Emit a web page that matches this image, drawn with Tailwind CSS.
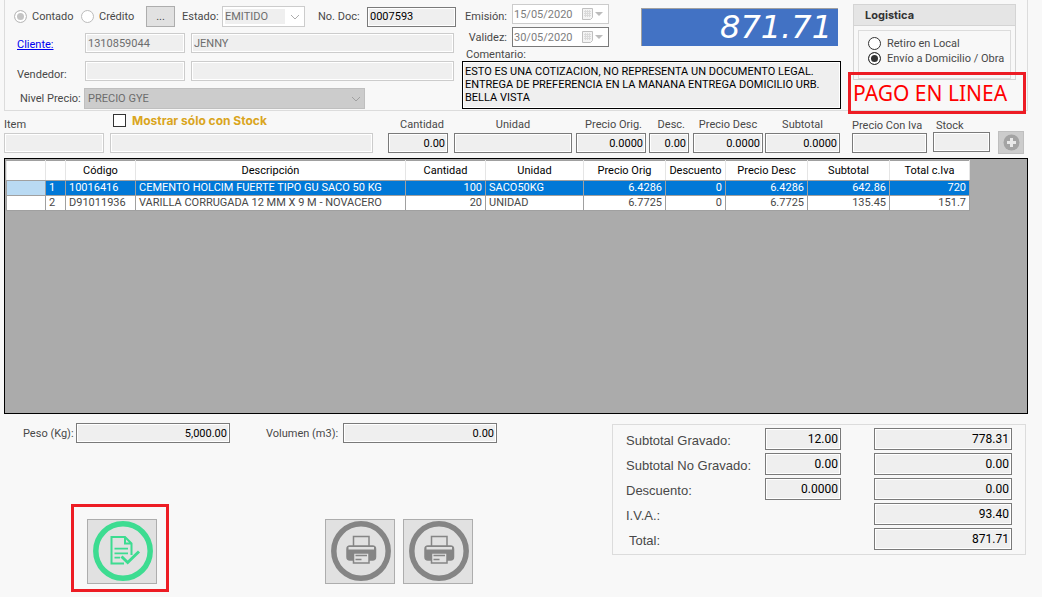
<!doctype html>
<html lang="es">

<head>
  <meta charset="UTF-8">
  <meta name="viewport" content="width=device-width, initial-scale=1.0">
  <title>Cotización</title>
  <script src="https://cdn.jsdelivr.net/npm/@tailwindcss/browser@4"></script>
</head>

<body class="bg-[#f8f8f8] font-[Roboto,'Liberation_Sans',sans-serif] text-[11px] leading-[13px] text-[#484848]">
  <div class="pl-1 pr-[14px]">

    <!-- header data -->
    <div class="relative flex h-[111px] border border-t-0 border-[#dcdcdc] pr-[11px]">
      <div class="w-[451px] shrink-0 pt-[6px]">
        <div class="flex h-[21px] items-center">
          <label class="ml-[9px] flex w-[67px] items-center gap-[5px]"><input type="radio" name="pago" checked disabled class="size-[13px] appearance-none rounded-full border border-[#bcbcbc] bg-white checked:bg-[#c4c4c4] checked:shadow-[inset_0_0_0_2px_#fff]">Contado</label>
          <label class="flex w-[65px] items-center gap-[5px]"><input type="radio" name="pago" disabled class="size-[13px] appearance-none rounded-full border border-[#bcbcbc] bg-white">Crédito</label>
          <button class="h-[21px] w-[29px] border border-[#adadad] bg-[#e1e1e1]">...</button>
          <label for="estado" class="ml-[7px] w-[40px]">Estado:</label>
          <div class="relative">
            <select id="estado" disabled class="h-[21px] w-[83px] appearance-none border border-[#ccc] bg-[#efefef] pl-[2px] text-[#6d6d6d] opacity-100 shadow-[inset_0_0_0_2px_#fff]"><option>EMITIDO</option></select>
            <svg class="pointer-events-none absolute top-[2px] right-[1px] h-[17px] w-[19px] bg-white" viewBox="0 0 19 17" fill="none" stroke="#adadad"><path d="M6 7l4 4 4-4"/></svg>
          </div>
          <label for="doc" class="ml-[13px] w-[49px] whitespace-nowrap">No. Doc:</label>
          <input id="doc" readonly value="0007593" class="h-[20px] min-w-0 flex-1 border border-[#7a7a7a] bg-[#efefef] px-[2px] text-black shadow-[inset_0_0_0_1px_#fff]">
        </div>
        <div class="mt-[6px] flex pr-[2px]">
          <a href="#" class="mt-[5px] ml-[12px] w-[68px] text-[#0000f0] underline">Cliente:</a>
          <input aria-label="Identificación" disabled value="1310859044" class="h-[20px] w-[100px] border border-[#ccc] bg-[#efefef] px-[2px] text-[#6d6d6d] shadow-[inset_0_0_0_1px_#fff]">
          <input aria-label="Nombre del cliente" disabled value="JENNY" class="ml-[6px] h-[20px] min-w-0 flex-1 border border-[#ccc] bg-[#efefef] px-[2px] text-[#6d6d6d] shadow-[inset_0_0_0_1px_#fff]">
        </div>
        <div class="mt-[8px] flex pr-[2px]">
          <label for="vendedor" class="mt-[7px] ml-[12px] w-[68px]">Vendedor:</label>
          <input id="vendedor" disabled class="h-[20px] w-[100px] border border-[#ccc] bg-[#efefef] px-[2px] shadow-[inset_0_0_0_1px_#fff]">
          <input aria-label="Nombre del vendedor" disabled class="ml-[6px] h-[20px] min-w-0 flex-1 border border-[#ccc] bg-[#efefef] px-[2px] shadow-[inset_0_0_0_1px_#fff]">
        </div>
        <div class="mt-[7px] flex items-center">
          <label for="nivel" class="ml-[15px] w-[64px] whitespace-nowrap">Nivel Precio:</label>
          <div class="relative">
            <select id="nivel" disabled class="h-[21px] w-[281px] appearance-none border border-[#bfbfbf] bg-[#ccc] px-[3px] text-[#6d6d6d] opacity-100"><option>PRECIO GYE</option></select>
            <svg class="pointer-events-none absolute top-[2px] right-0 h-[17px] w-[19px]" viewBox="0 0 19 17" fill="none" stroke="#a0a0a0"><path d="M6 7l4 4 4-4"/></svg>
          </div>
        </div>
      </div>

      <div class="ml-[6px] flex min-w-0 flex-1 flex-col">
        <div class="flex pt-1">
          <div class="w-[147px] shrink-0">
            <div class="flex h-[20px] items-center">
              <label for="emision" class="w-[50px] pt-1 pr-[5px] text-right">Emisión:</label>
              <div class="flex h-[20px] w-[97px] items-center border border-[#ccc] bg-white">
                <input id="emision" disabled value="15/05/2020" class="w-[69px] pl-[1px] text-[#7d7d7d]">
                <svg class="h-[14px] w-[22px]" viewBox="0 0 22 14"><path d="M.5 1.500h10v9l-2 2h-8z" fill="#f4f4f4" stroke="#c0c0c0"/><path d="M2 4.500h7M2 6.500h7M2 8.500h7M3.500 3v7M5.500 3v7M7.500 3v7" stroke="#dadada"/><path d="M13 5h8l-4 4z" fill="#bcbcbc"/></svg>
              </div>
            </div>
            <div class="mt-[3px] flex h-[20px] items-center">
              <label for="validez" class="w-[50px] pr-[5px] text-right">Validez:</label>
              <div class="flex h-[20px] w-[97px] items-center border border-[#7a7a7a] bg-white">
                <input id="validez" disabled value="30/05/2020" class="w-[69px] pl-[1px] text-[#7d7d7d]">
                <svg class="h-[14px] w-[22px]" viewBox="0 0 22 14"><path d="M.5 1.500h10v9l-2 2h-8z" fill="#f4f4f4" stroke="#c0c0c0"/><path d="M2 4.500h7M2 6.500h7M2 8.500h7M3.500 3v7M5.500 3v7M7.500 3v7" stroke="#dadada"/><path d="M13 5h8l-4 4z" fill="#bcbcbc"/></svg>
              </div>
            </div>
          </div>
          <div class="mt-1 mr-[3px] ml-[32px] flex h-[38px] flex-1 items-center justify-end border-t border-l border-[#a0a0a0] bg-[#4272c4] pr-[6px] font-['DejaVu_Sans',sans-serif] text-[32px] text-white italic">871.71</div>
        </div>
        <label for="comentario" class="mt-[2px] ml-[4px] leading-[12px]">Comentario:</label>
        <textarea id="comentario" readonly class="h-[48px] w-full resize-none overflow-hidden border border-black bg-[#efefef] px-[2px] pt-[3px] text-black shadow-[inset_0_0_0_1px_#fff]">ESTO ES UNA COTIZACION, NO REPRESENTA UN DOCUMENTO LEGAL.
ENTREGA DE PREFERENCIA EN LA MANANA ENTREGA DOMICILIO URB.
BELLA VISTA</textarea>
      </div>

      <fieldset class="mt-1 ml-[12px] h-[76px] w-[163px] shrink-0 border border-[#d4d4d4]">
        <div class="h-[21px] border-b border-[#d4d4d4] bg-[#e5e5e5] pt-1 pl-[11px] font-[Inter,sans-serif] text-[11px] font-bold text-[#333]">Logistica</div>
        <div class="mx-1 mt-1 h-[49px] border border-[#dcdcdc] pt-[5px] pl-[9px]">
          <label class="flex h-[15px] items-center gap-[6px] whitespace-nowrap"><input type="radio" name="envio" class="size-[13px] appearance-none rounded-full border border-[#333] bg-white">Retiro en Local</label>
          <label class="flex h-[15px] items-center gap-[6px] whitespace-nowrap"><input type="radio" name="envio" checked class="size-[13px] appearance-none rounded-full border border-[#333] bg-white checked:bg-[#333] checked:shadow-[inset_0_0_0_2px_#fff]">Envío a Domicilio / Obra</label>
        </div>
      </fieldset>

      <div class="absolute top-[72px] right-[1px] flex h-[42px] w-[178px] items-center border-3 border-[#ed1c24] pl-[2px] font-['Noto_Sans',sans-serif] text-[21px] whitespace-nowrap text-[#f00]">PAGO EN LINEA</div>
    </div>

    <!-- item entry -->
    <div class="flex h-[47px] items-start pt-[2px]">
      <div class="w-[100px]">
        <label for="item" class="block h-[20px] pt-[5px]">Item</label>
        <input id="item" disabled class="h-[20px] w-full border border-[#ccc] bg-[#efefef] shadow-[inset_0_0_0_1px_#fff]">
      </div>
      <div class="ml-[6px] min-w-0 flex-1">
        <label class="flex h-[20px] items-start gap-[6px] pt-[1px] pl-[3px] font-[Inter,sans-serif] text-[12px] font-bold text-[#daa520]"><input type="checkbox" class="size-[13px] appearance-none border border-[#333] bg-white">Mostrar sólo con Stock</label>
        <input aria-label="Descripción" disabled class="h-[20px] w-full border border-[#ccc] bg-[#efefef] shadow-[inset_0_0_0_1px_#fff]">
      </div>
      <div class="ml-[15px] w-[60px]">
        <label for="cantidad" class="block h-[20px] pt-[5px] pr-1 text-right">Cantidad</label>
        <input id="cantidad" value="0.00" class="h-[20px] w-full border border-[#7a7a7a] bg-[#efefef] px-[2px] text-right text-black shadow-[inset_0_0_0_1px_#fff]">
      </div>
      <div class="ml-[6px] w-[118px]">
        <label for="unidad" class="block h-[20px] pt-[5px] text-center">Unidad</label>
        <input id="unidad" class="h-[20px] w-full border border-[#7a7a7a] bg-[#efefef] px-[2px] shadow-[inset_0_0_0_1px_#fff]">
      </div>
      <div class="ml-1 w-[70px]">
        <label for="porig" class="block h-[20px] pt-[5px] pr-1 text-right whitespace-nowrap">Precio Orig.</label>
        <input id="porig" value="0.0000" class="h-[20px] w-full border border-[#7a7a7a] bg-[#efefef] px-[2px] text-right text-black shadow-[inset_0_0_0_1px_#fff]">
      </div>
      <div class="ml-[3px] w-[40px]">
        <label for="desc" class="block h-[20px] pt-[5px] pr-1 text-right">Desc.</label>
        <input id="desc" value="0.00" class="h-[20px] w-full border border-[#7a7a7a] bg-[#efefef] px-[2px] text-right text-black shadow-[inset_0_0_0_1px_#fff]">
      </div>
      <div class="ml-1 w-[70px]">
        <label for="pdesc" class="block h-[20px] pt-[5px] text-center whitespace-nowrap">Precio Desc</label>
        <input id="pdesc" value="0.0000" class="h-[20px] w-full border border-[#7a7a7a] bg-[#efefef] px-[2px] text-right text-black shadow-[inset_0_0_0_1px_#fff]">
      </div>
      <div class="ml-[2px] w-[75px]">
        <label for="subtotal" class="block h-[20px] pt-[5px] text-center">Subtotal</label>
        <input id="subtotal" value="0.0000" class="h-[20px] w-full border border-[#7a7a7a] bg-[#efefef] px-[2px] text-right text-black shadow-[inset_0_0_0_1px_#fff]">
      </div>
      <div class="ml-[12px] w-[75px]">
        <label for="piva" class="block h-[20px] pt-[6px] whitespace-nowrap">Precio Con Iva</label>
        <input id="piva" class="h-[20px] w-full border border-[#7a7a7a] bg-[#efefef] px-[2px] shadow-[inset_0_0_0_1px_#fff]">
      </div>
      <div class="ml-[6px] w-[57px]">
        <label for="stock" class="block h-[19px] pt-[6px] pl-[3px]">Stock</label>
        <input id="stock" class="h-[20px] w-full border border-[#7a7a7a] bg-[#efefef] px-[2px] shadow-[inset_0_0_0_1px_#fff]">
      </div>
      <button aria-label="Agregar" class="mt-[18px] mr-1 ml-[8px] flex h-[23px] w-[26px] items-center justify-center border border-[#bfbfbf] bg-[#ccc]">
        <svg class="size-[17px]" viewBox="0 0 17 17"><circle cx="8.500" cy="8.500" r="8" fill="#a3a3a3"/><path d="M8.500 4v9M4 8.500h9" stroke="#e8e8e8" stroke-width="3"/></svg>
      </button>
    </div>

    <!-- detail grid -->
    <div class="h-[256px] border border-black bg-[#ababab] pt-px pl-px">
      <table class="w-[964px] table-fixed border-collapse leading-[14px] [&_td]:border [&_td]:border-[#a0a0a0] [&_td]:px-[3px] [&_td]:py-0 [&_th]:border [&_th]:border-[#e5e5e5] [&_th]:border-y-[#a0a0a0] [&_th]:p-0 [&_th]:font-normal">
        <colgroup>
          <col class="w-[39px]"><col class="w-[20px]"><col class="w-[70px]"><col class="w-[270px]"><col class="w-[80px]"><col class="w-[98px]"><col class="w-[82px]"><col class="w-[60px]"><col class="w-[82px]"><col class="w-[82px]"><col class="w-[80px]">
        </colgroup>
        <thead>
          <tr class="h-[20px] bg-white text-black">
            <th></th><th></th><th>Código</th><th>Descripción</th><th>Cantidad</th><th>Unidad</th><th>Precio Orig</th><th>Descuento</th><th>Precio Desc</th><th>Subtotal</th><th>Total c.Iva</th>
          </tr>
        </thead>
        <tbody class="whitespace-nowrap">
          <tr class="h-[15px] bg-[#0078d7] text-white">
            <td class="bg-[#b9daf3]"></td><td>1</td><td>10016416</td><td>CEMENTO HOLCIM FUERTE TIPO GU SACO 50 KG</td><td class="text-right">100</td><td>SACO50KG</td><td class="text-right">6.4286</td><td class="text-right">0</td><td class="text-right">6.4286</td><td class="text-right">642.86</td><td class="text-right">720</td>
          </tr>
          <tr class="h-[15px] bg-white">
            <td></td><td>2</td><td>D91011936</td><td>VARILLA CORRUGADA 12 MM X 9 M - NOVACERO</td><td class="text-right">20</td><td>UNIDAD</td><td class="text-right">6.7725</td><td class="text-right">0</td><td class="text-right">6.7725</td><td class="text-right">135.45</td><td class="text-right">151.7</td>
          </tr>
        </tbody>
      </table>
    </div>

    <!-- footer -->
    <div class="flex justify-between pr-[2px]">
      <div>
        <div class="mt-[9px] flex items-center">
          <label for="peso" class="ml-[19px] w-[53px] whitespace-nowrap">Peso (Kg):</label>
          <input id="peso" readonly value="5,000.00" class="h-[20px] w-[154px] border border-[#7a7a7a] bg-[#efefef] px-[2px] text-right text-black shadow-[inset_0_0_0_1px_#fff]">
          <label for="volumen" class="ml-[36px] w-[77px] whitespace-nowrap">Volumen (m3):</label>
          <input id="volumen" readonly value="0.00" class="h-[20px] w-[154px] border border-[#7a7a7a] bg-[#efefef] px-[2px] text-right text-black shadow-[inset_0_0_0_1px_#fff]">
        </div>
        <div class="mt-[61px] flex items-center">
          <div class="ml-[67px] flex h-[88px] w-[98px] items-center justify-center border-3 border-[#ed1c24] pt-[6px] pl-[4px]">
            <button aria-label="Aprobar" class="flex h-[65px] w-[70px] items-center justify-center border border-[#adadad] bg-[#e1e1e1] pl-[2px]">
              <svg class="size-[60px]" viewBox="0 0 60 60" fill="none" stroke="#3ddc91"><circle cx="30" cy="30" r="27.200" stroke-width="5.500"/><path d="M31 42.500H18.500V16H32l6.500 6.500V34M32 16v6.500h6.500" stroke-width="2"/><path d="M21.500 27.700H35M21.500 32.300H35M21.500 36.700H27" stroke-width="1.800"/><path d="M28.500 35.500l6.200 6L46 30.500" stroke-width="3"/></svg>
            </button>
          </div>
          <button aria-label="Imprimir" class="mt-[6px] ml-[156px] flex h-[65px] w-[70px] items-center justify-center border border-[#adadad] bg-[#e1e1e1] pl-[2px]">
            <svg class="size-[60px]" viewBox="0 0 60 60" fill="none" stroke="#858585"><circle cx="30" cy="30" r="27.200" stroke-width="5.500"/><path d="M22.500 25V15.500h15.500V25" stroke-width="1.500"/><rect x="16" y="25" width="28.500" height="14" rx="3" fill="#858585" stroke-width="1.500"/><path d="M17.500 26h25.500v2.500H17.500z" fill="#e1e1e1" stroke="none"/><path d="M22.500 32h15.500v10H22.500z" fill="#e1e1e1" stroke-width="1.500"/><path d="M24.500 34.500h11.500M24.500 38.500h6" stroke-width="1.400"/></svg>
          </button>
          <button aria-label="Imprimir copia" class="mt-[6px] ml-[8px] flex h-[65px] w-[70px] items-center justify-center border border-[#adadad] bg-[#e1e1e1] pl-[2px]">
            <svg class="size-[60px]" viewBox="0 0 60 60" fill="none" stroke="#858585"><circle cx="30" cy="30" r="27.200" stroke-width="5.500"/><path d="M22.500 25V15.500h15.500V25" stroke-width="1.500"/><rect x="16" y="25" width="28.500" height="14" rx="3" fill="#858585" stroke-width="1.500"/><path d="M17.500 26h25.500v2.500H17.500z" fill="#e1e1e1" stroke="none"/><path d="M22.500 32h15.500v10H22.500z" fill="#e1e1e1" stroke-width="1.500"/><path d="M24.500 34.500h11.500M24.500 38.500h6" stroke-width="1.400"/></svg>
          </button>
        </div>
      </div>

      <div class="mt-[10px] grid h-[131px] w-[414px] grid-cols-[139px_76px_138px] content-start items-center gap-y-[3px] border border-[#dcdcdc] pt-[3px] pl-[13px] font-['Liberation_Sans',sans-serif] text-[13px] [&_input]:h-[22px] [&_input]:w-full [&_input]:border [&_input]:border-[#7a7a7a] [&_input]:bg-[#efefef] [&_input]:px-[2px] [&_input]:text-right [&_input]:font-[Roboto,sans-serif] [&_input]:text-[12px] [&_input]:text-black [&_input]:shadow-[inset_0_0_0_1px_#fff] [&_label]:pt-[2px]">
        <label for="gravado">Subtotal Gravado:</label>
        <input aria-label="Porcentaje IVA" readonly value="12.00">
        <input id="gravado" readonly value="778.31" class="ml-[33px]">
        <label for="nogravado">Subtotal No Gravado:</label>
        <input aria-label="Porcentaje no gravado" readonly value="0.00">
        <input id="nogravado" readonly value="0.00" class="ml-[33px]">
        <label for="descuento">Descuento:</label>
        <input aria-label="Porcentaje descuento" readonly value="0.0000">
        <input id="descuento" readonly value="0.00" class="ml-[33px]">
        <label for="iva" class="col-span-2">I.V.A.:</label>
        <input id="iva" readonly value="93.40" class="ml-[33px]">
        <label for="total" class="col-span-2 pl-[3px]">Total:</label>
        <input id="total" readonly value="871.71" class="ml-[33px]">
      </div>
    </div>
  </div>
</body>

</html>
